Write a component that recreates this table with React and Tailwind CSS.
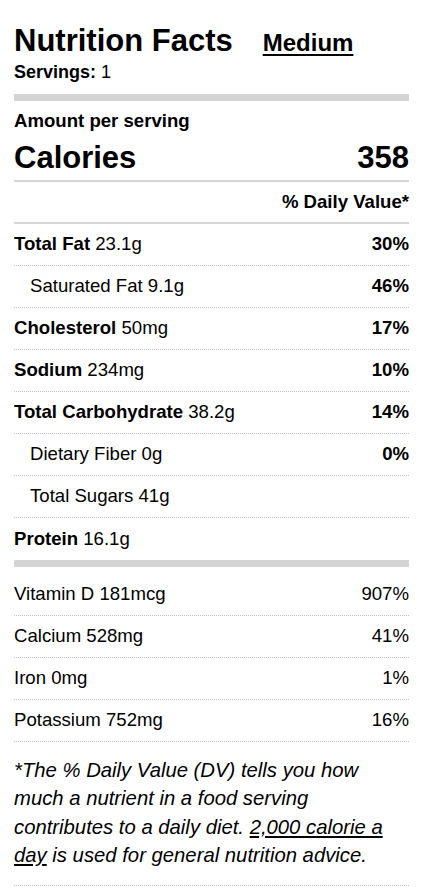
import React from "react";

const nutrients = [
  { name: "Total Fat", amount: "23.1g", dv: "30%", bold: true },
  { name: "Saturated Fat", amount: "9.1g", dv: "46%", indent: true },
  { name: "Cholesterol", amount: "50mg", dv: "17%", bold: true },
  { name: "Sodium", amount: "234mg", dv: "10%", bold: true },
  { name: "Total Carbohydrate", amount: "38.2g", dv: "14%", bold: true },
  { name: "Dietary Fiber", amount: "0g", dv: "0%", indent: true },
  { name: "Total Sugars", amount: "41g", indent: true },
  { name: "Protein", amount: "16.1g", bold: true, last: true },
];

const vitamins = [
  { name: "Vitamin D", amount: "181mcg", dv: "907%" },
  { name: "Calcium", amount: "528mg", dv: "41%" },
  { name: "Iron", amount: "0mg", dv: "1%" },
  { name: "Potassium", amount: "752mg", dv: "16%" },
];

const NutrientRow = ({ item }) => (
  <div
    className={`flex h-[42px] items-center justify-between ${
      item.last ? "" : "border-b border-dotted border-[#c4c4c4]"
    } ${item.indent ? "pl-4" : ""}`}
  >
    <span>
      {item.bold ? <span className="font-bold">{item.name}</span> : item.name}{" "}
      {item.amount}
    </span>
    {item.dv && <span className="font-bold">{item.dv}</span>}
  </div>
);

export default function App() {
  return (
    <div
      className="min-h-screen bg-white px-[14px] pt-[25px] text-black"
      style={{ fontFamily: '"Liberation Sans", Arial, sans-serif' }}
    >
      {/* Header */}
      <div className="flex items-baseline">
        <h1 className="text-[31px] font-bold leading-none">Nutrition Facts</h1>
        <span className="ml-[30px] text-[24px] font-bold leading-none underline decoration-2 underline-offset-[3px]">
          Medium
        </span>
      </div>
      <div className="mt-[7px] text-[18px] leading-none">
        <span className="font-bold">Servings:</span> 1
      </div>
      <div className="mt-[13px] h-[7px] bg-[#d4d4d4]" />

      {/* Calories */}
      <div className="border-b-2 border-[#d6d6d6] pt-[11px] pb-[7px]">
        <div className="text-[18.6px] font-bold leading-none">Amount per serving</div>
        <div className="mt-[11px] flex justify-between text-[31px] font-bold leading-none">
          <span>Calories</span>
          <span>358</span>
        </div>
      </div>

      <div className="text-[18.6px]">
        <div className="flex h-[42px] items-center justify-end border-b-2 border-[#d6d6d6] font-bold">
          % Daily Value*
        </div>
        {nutrients.map((item) => (
          <NutrientRow key={item.name} item={item} />
        ))}
        <div className="h-[7px] bg-[#d4d4d4]" />
        <div className="mt-[7px]">
          {vitamins.map((v) => (
            <div
              key={v.name}
              className="flex h-[42px] items-center justify-between border-b border-dotted border-[#c4c4c4]"
            >
              <span>
                {v.name} {v.amount}
              </span>
              <span>{v.dv}</span>
            </div>
          ))}
        </div>
      </div>

      {/* Footnote */}
      <p className="mt-[14px] border-b border-dotted border-[#c4c4c4] pb-[15px] text-[20.3px] leading-[28.5px] italic">
        *The % Daily Value (DV) tells you how
        <br />
        much a nutrient in a food serving
        <br />
        contributes to a daily diet.{" "}
        <span className="underline">2,000 calorie a</span>
        <br />
        <span className="underline">day</span> is used for general nutrition
        advice.
      </p>
    </div>
  );
}
